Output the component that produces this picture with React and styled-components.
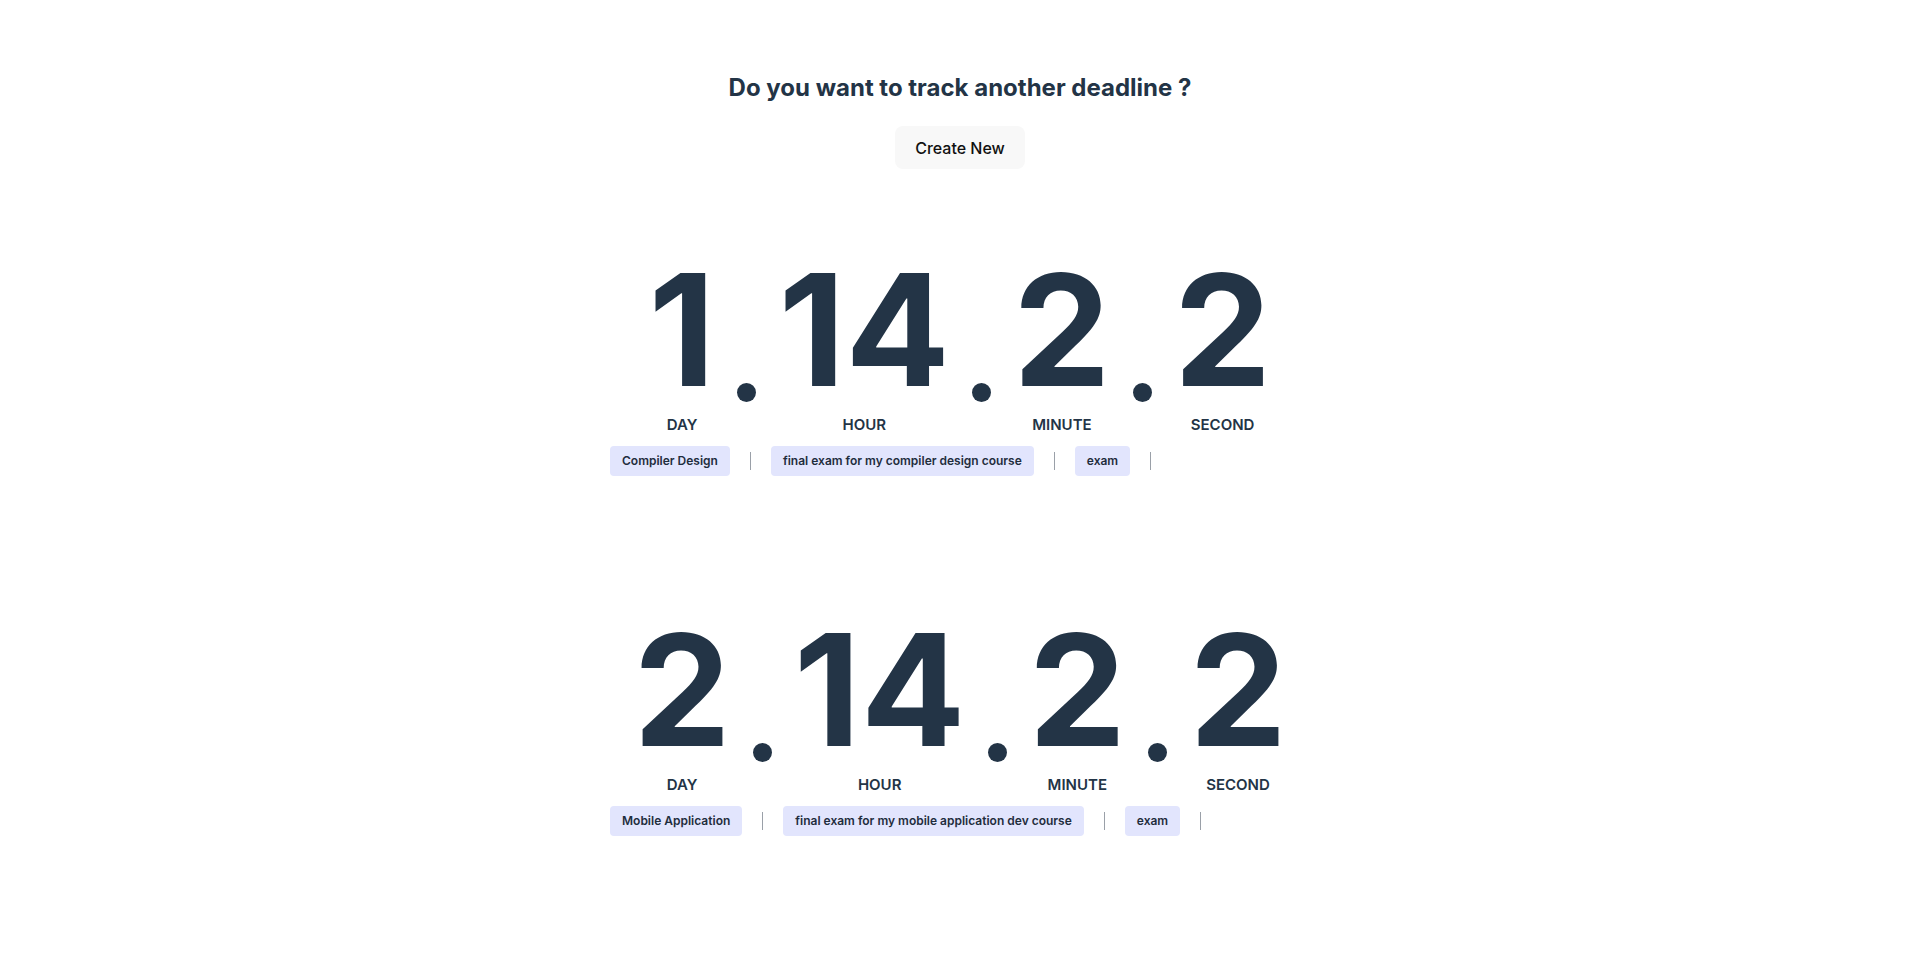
import React from "react";
import styled, { createGlobalStyle } from "styled-components";

const GlobalStyle = createGlobalStyle`
  html, body {
    margin: 0;
    padding: 0;
    background: #ffffff;
    font-family: Inter, "Noto Sans", "Liberation Sans", sans-serif;
    color: #233446;
  }
  * { box-sizing: border-box; }
`;

const Page = styled.main`
  display: flex;
  flex-direction: column;
  align-items: center;
  padding-top: 72px;
  padding-bottom: 80px;
`;

const Heading = styled.h2`
  margin: 0;
  font-size: 24px;
  line-height: 32px;
  font-weight: 700;
  color: #233446;
`;

const CreateButton = styled.button`
  margin-top: 22px;
  height: 43px;
  padding: 0 20px;
  border: none;
  border-radius: 8px;
  background: #f8f8f8;
  font-family: inherit;
  font-size: 16px;
  font-weight: 500;
  color: #111111;
  cursor: pointer;
`;

const List = styled.section`
  margin-top: 83px;
  display: flex;
  flex-direction: column;
  gap: 136px;
`;

const Card = styled.article`
  width: 700px;
  display: flex;
  flex-direction: column;
`;

const Clock = styled.div`
  align-self: center;
  display: grid;
  grid-template-columns: repeat(7, auto);
  grid-template-rows: auto auto;
  align-items: end;
`;

const Number = styled.span`
  grid-row: 1;
  font-size: 155px;
  line-height: 155px;
  font-weight: 700;
  color: #233446;
  text-align: center;
`;

const Dot = styled.span`
  grid-row: 1;
  width: 19px;
  height: 19px;
  margin: 0 22px 5px;
  border-radius: 50%;
  background: #233446;
`;

const Label = styled.span`
  grid-row: 2;
  grid-column: ${(p) => p.$col};
  margin-top: 6px;
  text-align: center;
  font-size: 15px;
  line-height: 24px;
  font-weight: 600;
  text-transform: uppercase;
  color: #233446;
`;

const Tags = styled.div`
  margin-top: 9px;
  display: flex;
  align-items: center;
  gap: 20px;
`;

const Tag = styled.span`
  padding: 6px 12px;
  border-radius: 4px;
  background: #e2e5fd;
  font-size: 12px;
  line-height: 18px;
  font-weight: 600;
  color: #1f2d3d;
`;

const Separator = styled.span`
  width: 1px;
  height: 18px;
  background: #9aa0a8;
`;

const deadlines = [
  {
    id: 1,
    values: [1, 14, 2, 2],
    tags: ["Compiler Design", "final exam for my compiler design course", "exam"],
  },
  {
    id: 2,
    values: [2, 14, 2, 2],
    tags: ["Mobile Application", "final exam for my mobile application dev course", "exam"],
  },
];

const units = ["Day", "Hour", "Minute", "Second"];

function Countdown({ values, tags }) {
  const cells = [];
  values.forEach((v, i) => {
    if (i > 0) cells.push(<Dot key={`d${i}`} />);
    cells.push(<Number key={`n${i}`}>{v}</Number>);
  });
  return (
    <Card>
      <Clock>
        {cells}
        {units.map((u, i) => (
          <Label key={u} $col={i * 2 + 1}>
            {u}
          </Label>
        ))}
      </Clock>
      <Tags>
        {tags.map((t) => (
          <React.Fragment key={t}>
            <Tag>{t}</Tag>
            <Separator />
          </React.Fragment>
        ))}
      </Tags>
    </Card>
  );
}

export default function App() {
  return (
    <>
      <GlobalStyle />
      <Page>
        <Heading>Do you want to track another deadline ?</Heading>
        <CreateButton>Create New</CreateButton>
        <List>
          {deadlines.map((d) => (
            <Countdown key={d.id} values={d.values} tags={d.tags} />
          ))}
        </List>
      </Page>
    </>
  );
}
